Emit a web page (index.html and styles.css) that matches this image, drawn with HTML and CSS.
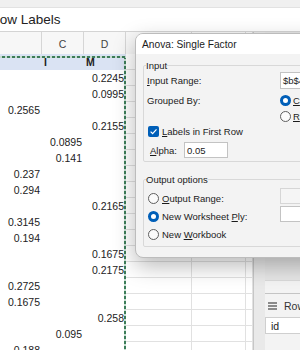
FILE: index.html
```html
<!DOCTYPE html>
<html lang="en">
<head>
  <meta charset="UTF-8">
  <meta name="viewport" content="width=device-width, initial-scale=1.0">
  <title>Anova: Single Factor</title>
  <link rel="stylesheet" href="styles.css">
</head>
<body>
  <div class="app">
    <div class="ribbon"></div>
    <div class="fbar"><span>Row Labels</span></div>

    <div class="main">
      <div class="sheet">
        <div class="colhead">
          <span></span><span>C</span><span>D</span><span></span><span></span><span></span>
        </div>

        <div class="row head"><span></span><span>I</span><span>M</span><i></i><i></i><i></i></div>
        <div class="row"><span></span><span></span><span>0.2245</span><i></i><i></i><i></i></div>
        <div class="row"><span></span><span></span><span>0.0995</span><i></i><i></i><i></i></div>
        <div class="row"><span>0.2565</span><span></span><span></span><i></i><i></i><i></i></div>
        <div class="row"><span></span><span></span><span>0.2155</span><i></i><i></i><i></i></div>
        <div class="row"><span></span><span>0.0895</span><span></span><i></i><i></i><i></i></div>
        <div class="row"><span></span><span>0.141</span><span></span><i></i><i></i><i></i></div>
        <div class="row"><span>0.237</span><span></span><span></span><i></i><i></i><i></i></div>
        <div class="row"><span>0.294</span><span></span><span></span><i></i><i></i><i></i></div>
        <div class="row"><span></span><span></span><span>0.2165</span><i></i><i></i><i></i></div>
        <div class="row"><span>0.3145</span><span></span><span></span><i></i><i></i><i></i></div>
        <div class="row"><span>0.194</span><span></span><span></span><i></i><i></i><i></i></div>
        <div class="row"><span></span><span></span><span>0.1675</span><i></i><i></i><i></i></div>
        <div class="row"><span></span><span></span><span>0.2175</span><i></i><i></i><i></i></div>
        <div class="row"><span>0.2725</span><span></span><span></span><i></i><i></i><i></i></div>
        <div class="row"><span>0.1675</span><span></span><span></span><i></i><i></i><i></i></div>
        <div class="row"><span></span><span></span><span>0.258</span><i></i><i></i><i></i></div>
        <div class="row"><span></span><span>0.095</span><span></span><i></i><i></i><i></i></div>
        <div class="row"><span>0.188</span><span></span><span></span><i></i><i></i><i></i></div>

        <!-- copy marquee around the pivot range -->
        <div class="marquee"></div>
      </div>

      <div class="pane">
        <div class="pane-list"></div>
        <div class="pane-area">
          <div class="area-title">
            <svg width="9" height="8" viewBox="0 0 9 8"><rect x="0" y="0" width="9" height="2" fill="#8a8a8a"/><rect x="0" y="3" width="9" height="2" fill="#8a8a8a"/><rect x="0" y="6" width="9" height="2" fill="#8a8a8a"/></svg>
            <span>Rows</span>
          </div>
          <div class="area-item">id</div>
        </div>
      </div>
    </div>

    <div class="dialog">
      <div class="dlg-title">Anova: Single Factor</div>
      <div class="dlg-body">
        <fieldset class="group group-input">
          <legend>Input</legend>
          <div class="field f-range">
            <span class="lbl"><u>I</u>nput Range:</span>
            <span class="box">$b$4:$m$29</span>
          </div>
          <div class="field f-opt">
            <span class="lbl">Grouped By:</span>
            <span class="opt"><span class="radio on"></span><span><u>C</u>olumns</span></span>
          </div>
          <div class="field f-opt">
            <span class="lbl"></span>
            <span class="opt"><span class="radio"></span><span><u>R</u>ows</span></span>
          </div>
          <div class="check-row">
            <span class="check"><svg width="11" height="11" viewBox="0 0 11 11"><path d="M2.6 5.6l2 2 3.9-4.3" fill="none" stroke="#fff" stroke-width="1.2"/></svg></span>
            <span><u>L</u>abels in First Row</span>
          </div>
          <div class="alpha-row">
            <span class="lbl-alpha"><u>A</u>lpha:</span>
            <span class="box alpha">0.05</span>
          </div>
        </fieldset>

        <fieldset class="group group-output">
          <legend>Output options</legend>
          <div class="out-row">
            <span class="opt"><span class="radio"></span><span><u>O</u>utput Range:</span></span>
            <span class="box off"></span>
          </div>
          <div class="out-row">
            <span class="opt"><span class="radio on"></span><span>New Worksheet <u>P</u>ly:</span></span>
            <span class="box"></span>
          </div>
          <div class="out-row">
            <span class="opt"><span class="radio"></span><span>New <u>W</u>orkbook</span></span>
          </div>
        </fieldset>
      </div>
    </div>
  </div>
</body>
</html>
```

FILE: styles.css
```css
body {
  margin: 0;
  font-family: "Liberation Sans", Arial, sans-serif;
  color: #222;
}

.app {
  position: relative;
  width: 300px;
  height: 350px;
  overflow: hidden;
  background: #fff;
}

.ribbon {
  height: 8px;
  background: #f0f0f0;
  border-bottom: 1px solid #e2e2e2;
  box-sizing: border-box;
}

.fbar {
  height: 24px;
  border-bottom: 1px solid #d4d4d4;
  box-sizing: border-box;
  font-size: 13.5px;
  line-height: 24px;
  white-space: nowrap;
  overflow: hidden;
}

.fbar span {
  margin-left: -10px;
}

.main {
  display: flex;
  height: 318px;
}

/* sheet */
.sheet {
  position: relative;
  width: 253px;
  flex: 0 0 253px;
}

.colhead,
.row {
  display: grid;
  grid-template-columns: 42px 42px 42px 66px 54px 7px;
}

.colhead {
  height: 22px;
  background: #f7f7f7;
  font-size: 10.5px;
  line-height: 24px;
  color: #444;
  text-align: center;
}

.colhead span {
  border-right: 1px solid #d6d6d6;
}

.row {
  height: 16px;
  font-size: 10.5px;
  line-height: 16px;
}

.row span {
  text-align: right;
  padding-right: 2px;
  white-space: nowrap;
}

.row i {
  border-right: 1px solid #e1e1e1;
  border-bottom: 1px solid #e1e1e1;
}

.row.head span {
  background: #dae3f3;
  font-weight: bold;
  text-align: left;
  padding: 0 0 0 2px;
}

.marquee {
  position: absolute;
  left: -3px;
  top: 24px;
  width: 129px;
  height: 400px;
  background:
    repeating-linear-gradient(90deg, #3d7d59 0 3px, #c7ddd0 3px 5px) top left / 100% 2px no-repeat,
    repeating-linear-gradient(180deg, #3d7d59 0 3px, #c7ddd0 3px 5px) top right / 2px 100% no-repeat;
}

/* field list pane */
.pane {
  flex: 1;
  background: #e9e9e9;
  border-left: 1px solid #c6c6c6;
  padding-left: 11px;
  display: flex;
  flex-direction: column;
}

.pane-list {
  height: 248px;
  background: #e6e6e6;
  border-bottom: 1px solid #dadada;
}

.pane-area {
  flex: 1;
  background: #f3f3f3;
  padding-top: 12px;
}

.area-title {
  display: flex;
  align-items: center;
  gap: 7px;
  height: 23px;
  padding-left: 3px;
  border-top: 1px solid #c4c4c4;
  font-size: 10.5px;
  color: #333;
  white-space: nowrap;
}

.area-item {
  height: 17px;
  background: #fff;
  border: 1px solid #cfcfcf;
  border-right: none;
  box-sizing: border-box;
  padding-left: 5px;
  font-size: 10.5px;
  line-height: 16px;
}

/* dialog */
.dialog {
  position: absolute;
  left: 135px;
  top: 33px;
  width: 200px;
  height: 225px;
  box-sizing: border-box;
  background: #f3f3f3;
  border: 1px solid #bcbcbc;
  border-radius: 8px;
  box-shadow: 0 8px 22px rgba(0, 0, 0, 0.28);
  overflow: hidden;
  font-size: 9.5px;
  color: #1b1b1b;
}

.dlg-title {
  height: 20px;
  background: #fff;
  padding-left: 6px;
  font-size: 10.2px;
  line-height: 21px;
}

.dlg-body {
  padding: 6px 0 0 7px;
}

.group {
  margin: 0;
  border: 1px solid #d8d8d8;
  border-radius: 2px;
  padding: 1px 0 3px 2px;
}

.group legend {
  padding: 0;
  font-size: 9.5px;
  line-height: 11px;
}

.group-output {
  margin-top: 12px;
  padding-top: 4px;
}

.field {
  display: grid;
  grid-template-columns: 134px 1fr;
  align-items: center;
}

.f-range {
  height: 17px;
}

.f-range + .f-opt {
  margin-top: 3px;
}

.f-opt {
  height: 16px;
}

.lbl {
  padding-left: 1px;
}

.box {
  display: block;
  height: 17px;
  box-sizing: border-box;
  background: #fff;
  border: 1px solid #c3c3c3;
  padding-left: 2px;
  line-height: 15px;
  white-space: nowrap;
  overflow: hidden;
}

.box.off {
  background: #f5f5f5;
  border-color: #d6d6d6;
}

.opt {
  display: flex;
  align-items: center;
  gap: 2px;
  white-space: nowrap;
}

.radio {
  width: 11px;
  height: 11px;
  box-sizing: border-box;
  border-radius: 50%;
  border: 1px solid #5e5e5e;
  background: #fbfbfb;
  flex: none;
}

.radio.on {
  border: 3.5px solid #005fb8;
  background: #fff;
}

.check-row {
  display: flex;
  align-items: center;
  gap: 3px;
  height: 14px;
  padding-left: 2px;
}

.check {
  width: 11px;
  height: 11px;
  border-radius: 2px;
  background: #005fb8;
  display: flex;
}

.alpha-row {
  display: grid;
  grid-template-columns: 38px 44px;
  align-items: center;
  margin-top: 4px;
  height: 16px;
}

.lbl-alpha {
  padding-left: 4px;
}

.box.alpha {
  height: 16px;
}

.out-row {
  display: grid;
  grid-template-columns: 134px 1fr;
  align-items: start;
  height: 18px;
}

.out-row .opt {
  height: 18px;
  gap: 3px;
  padding-left: 2px;
}

.out-row .box {
  height: 16px;
  margin-top: -1px;
}
```
